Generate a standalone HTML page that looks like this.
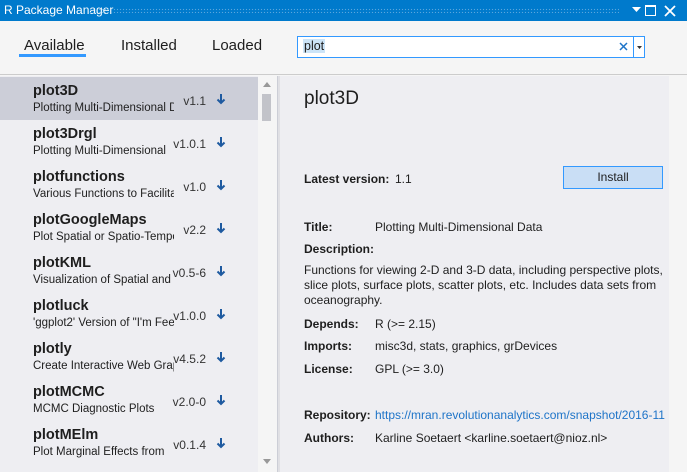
<!DOCTYPE html>
<html><head><style>
*{margin:0;padding:0;box-sizing:border-box}
body{width:687px;height:472px;overflow:hidden;background:#f5f5f5;font-family:"Liberation Sans",sans-serif;color:#1e1e1e;position:relative}
.abs{position:absolute;white-space:nowrap}
#tb{position:absolute;left:0;top:0;width:687px;height:21px;background:#007acc;color:#fff;font-size:12px}
#hdr{position:absolute;top:21px;left:0;width:687px;height:54px;background:#f5f5f5;border-bottom:1px solid #ccc}
#list{position:absolute;left:0;top:76px;width:258px;height:396px;background:#eeeef2;overflow:hidden}
.row{position:absolute;left:0;width:258px;height:43px}
.row .n{position:absolute;left:33px;top:6px;font-size:14.5px;font-weight:bold;color:#1e1e1e}
.row .d{position:absolute;left:33px;top:25px;font-size:11.5px;width:141px;overflow:hidden;white-space:nowrap}
.row .v{position:absolute;right:52px;top:17px;font-size:12px;color:#333}
.row svg{position:absolute;left:216px;top:16px}
#sb{position:absolute;left:258px;top:76px;width:19px;height:396px;background:#f5f5f5}
#sep{position:absolute;left:277px;top:76px;width:3px;height:396px;background:#e0e0e4;border-left:1px solid #ccced6}
#det{position:absolute;left:280px;top:76px;width:389px;height:396px;background:#eeeef2;font-size:12px;overflow:hidden}
.l{position:absolute;left:24px;font-weight:bold}
.t{position:absolute;left:95px;white-space:nowrap}
</style></head><body>
<div id="tb">
<div class="abs" style="left:4px;top:3px">R Package Manager</div>
<div class="abs" style="left:89px;top:8px;width:530px;height:5px;background-image:radial-gradient(circle,#5aa6dd 0.7px,transparent 0.8px);background-size:3px 3px"></div>
<svg class="abs" style="left:632px;top:7px" width="9" height="6"><path d="M0 0H9L4.5 5Z" fill="#fff"/></svg>
<div class="abs" style="left:645px;top:5px;width:11px;height:11px;border:1.5px solid #fff;border-top-width:2px"></div>
<svg class="abs" style="left:664px;top:5px" width="12" height="12"><path d="M1 1L11 11M11 1L1 11" stroke="#fff" stroke-width="1.8"/></svg>
</div>
<div id="hdr">
<div class="abs" style="left:24px;top:16px;font-size:15px">Available</div>
<div class="abs" style="left:19px;top:33px;width:67px;height:3px;background:#3399ff"></div>
<div class="abs" style="left:121px;top:16px;font-size:15px">Installed</div>
<div class="abs" style="left:212px;top:16px;font-size:15px">Loaded</div>
<div class="abs" style="left:297px;top:15px;width:337px;height:22px;background:#fff;border:1px solid #3399ff"></div>
<div class="abs" style="left:303px;top:18px;font-size:12.5px;background:#cce4f7;padding:0 1px">plot</div>
<svg class="abs" style="left:619px;top:21px" width="9" height="9"><path d="M1 1L8 8M8 1L1 8" stroke="#1e74c8" stroke-width="1.5"/></svg>
<div class="abs" style="left:633px;top:15px;width:12px;height:22px;background:#fff;border:1px solid #3399ff"></div>
<svg class="abs" style="left:637px;top:25px" width="5" height="3"><path d="M0 0H5L2.5 3Z" fill="#333"/></svg>
</div>
<div id="list">
<div class="row" style="top:1px;background:#ccced8"><div class="n">plot3D</div><div class="d">Plotting Multi-Dimensional Data</div><div class="v">v1.1</div><svg width="10" height="12"><path d="M5 1V10M1.5 6.5L5 10L8.5 6.5" stroke="#1e5aa0" stroke-width="2" fill="none"/></svg></div>
<div class="row" style="top:44px"><div class="n">plot3Drgl</div><div class="d">Plotting Multi-Dimensional</div><div class="v">v1.0.1</div><svg width="10" height="12"><path d="M5 1V10M1.5 6.5L5 10L8.5 6.5" stroke="#1e5aa0" stroke-width="2" fill="none"/></svg></div>
<div class="row" style="top:87px"><div class="n">plotfunctions</div><div class="d">Various Functions to Facilitate</div><div class="v">v1.0</div><svg width="10" height="12"><path d="M5 1V10M1.5 6.5L5 10L8.5 6.5" stroke="#1e5aa0" stroke-width="2" fill="none"/></svg></div>
<div class="row" style="top:130px"><div class="n">plotGoogleMaps</div><div class="d">Plot Spatial or Spatio-Temporal</div><div class="v">v2.2</div><svg width="10" height="12"><path d="M5 1V10M1.5 6.5L5 10L8.5 6.5" stroke="#1e5aa0" stroke-width="2" fill="none"/></svg></div>
<div class="row" style="top:173px"><div class="n">plotKML</div><div class="d">Visualization of Spatial and</div><div class="v">v0.5-6</div><svg width="10" height="12"><path d="M5 1V10M1.5 6.5L5 10L8.5 6.5" stroke="#1e5aa0" stroke-width="2" fill="none"/></svg></div>
<div class="row" style="top:216px"><div class="n">plotluck</div><div class="d">'ggplot2' Version of "I'm Feeling</div><div class="v">v1.0.0</div><svg width="10" height="12"><path d="M5 1V10M1.5 6.5L5 10L8.5 6.5" stroke="#1e5aa0" stroke-width="2" fill="none"/></svg></div>
<div class="row" style="top:259px"><div class="n">plotly</div><div class="d">Create Interactive Web Graphics</div><div class="v">v4.5.2</div><svg width="10" height="12"><path d="M5 1V10M1.5 6.5L5 10L8.5 6.5" stroke="#1e5aa0" stroke-width="2" fill="none"/></svg></div>
<div class="row" style="top:302px"><div class="n">plotMCMC</div><div class="d">MCMC Diagnostic Plots</div><div class="v">v2.0-0</div><svg width="10" height="12"><path d="M5 1V10M1.5 6.5L5 10L8.5 6.5" stroke="#1e5aa0" stroke-width="2" fill="none"/></svg></div>
<div class="row" style="top:345px"><div class="n">plotMElm</div><div class="d">Plot Marginal Effects from</div><div class="v">v0.1.4</div><svg width="10" height="12"><path d="M5 1V10M1.5 6.5L5 10L8.5 6.5" stroke="#1e5aa0" stroke-width="2" fill="none"/></svg></div>
</div>
<div id="sb">
<div class="abs" style="left:5px;top:6px;width:0;height:0;border-left:4px solid transparent;border-right:4px solid transparent;border-bottom:5px solid #999"></div>
<div class="abs" style="left:4px;top:18px;width:9px;height:27px;background:#c2c3c9"></div>
<div class="abs" style="left:5px;top:383px;width:0;height:0;border-left:4px solid transparent;border-right:4px solid transparent;border-top:5px solid #999"></div>
</div>
<div id="sep"></div>
<div id="det">
<div class="abs" style="left:24px;top:12px;font-size:19px">plot3D</div>
<div class="l" style="top:96px">Latest version:</div><div class="abs" style="left:115px;top:96px">1.1</div>
<div class="abs" style="left:283px;top:90px;width:100px;height:23px;background:#c9def5;border:1px solid #3399ff;text-align:center;line-height:21px">Install</div>
<div class="l" style="top:144px">Title:</div><div class="t" style="top:144px">Plotting Multi-Dimensional Data</div>
<div class="l" style="top:166px">Description:</div>
<div class="abs" style="left:24px;top:187px;line-height:15px">Functions for viewing 2-D and 3-D data, including perspective plots,<br>slice plots, surface plots, scatter plots, etc. Includes data sets from<br>oceanography.</div>
<div class="l" style="top:241px">Depends:</div><div class="t" style="top:241px">R (&gt;= 2.15)</div>
<div class="l" style="top:263px">Imports:</div><div class="t" style="top:263px">misc3d, stats, graphics, grDevices</div>
<div class="l" style="top:286px">License:</div><div class="t" style="top:286px">GPL (&gt;= 3.0)</div>
<div class="l" style="top:332px">Repository:</div><div class="t" style="top:332px;color:#1e74c8">https://mran.revolutionanalytics.com/snapshot/2016-11</div>
<div class="l" style="top:355px">Authors:</div><div class="t" style="top:355px">Karline Soetaert &lt;karline.soetaert@nioz.nl&gt;</div>
</div>
</body></html>
